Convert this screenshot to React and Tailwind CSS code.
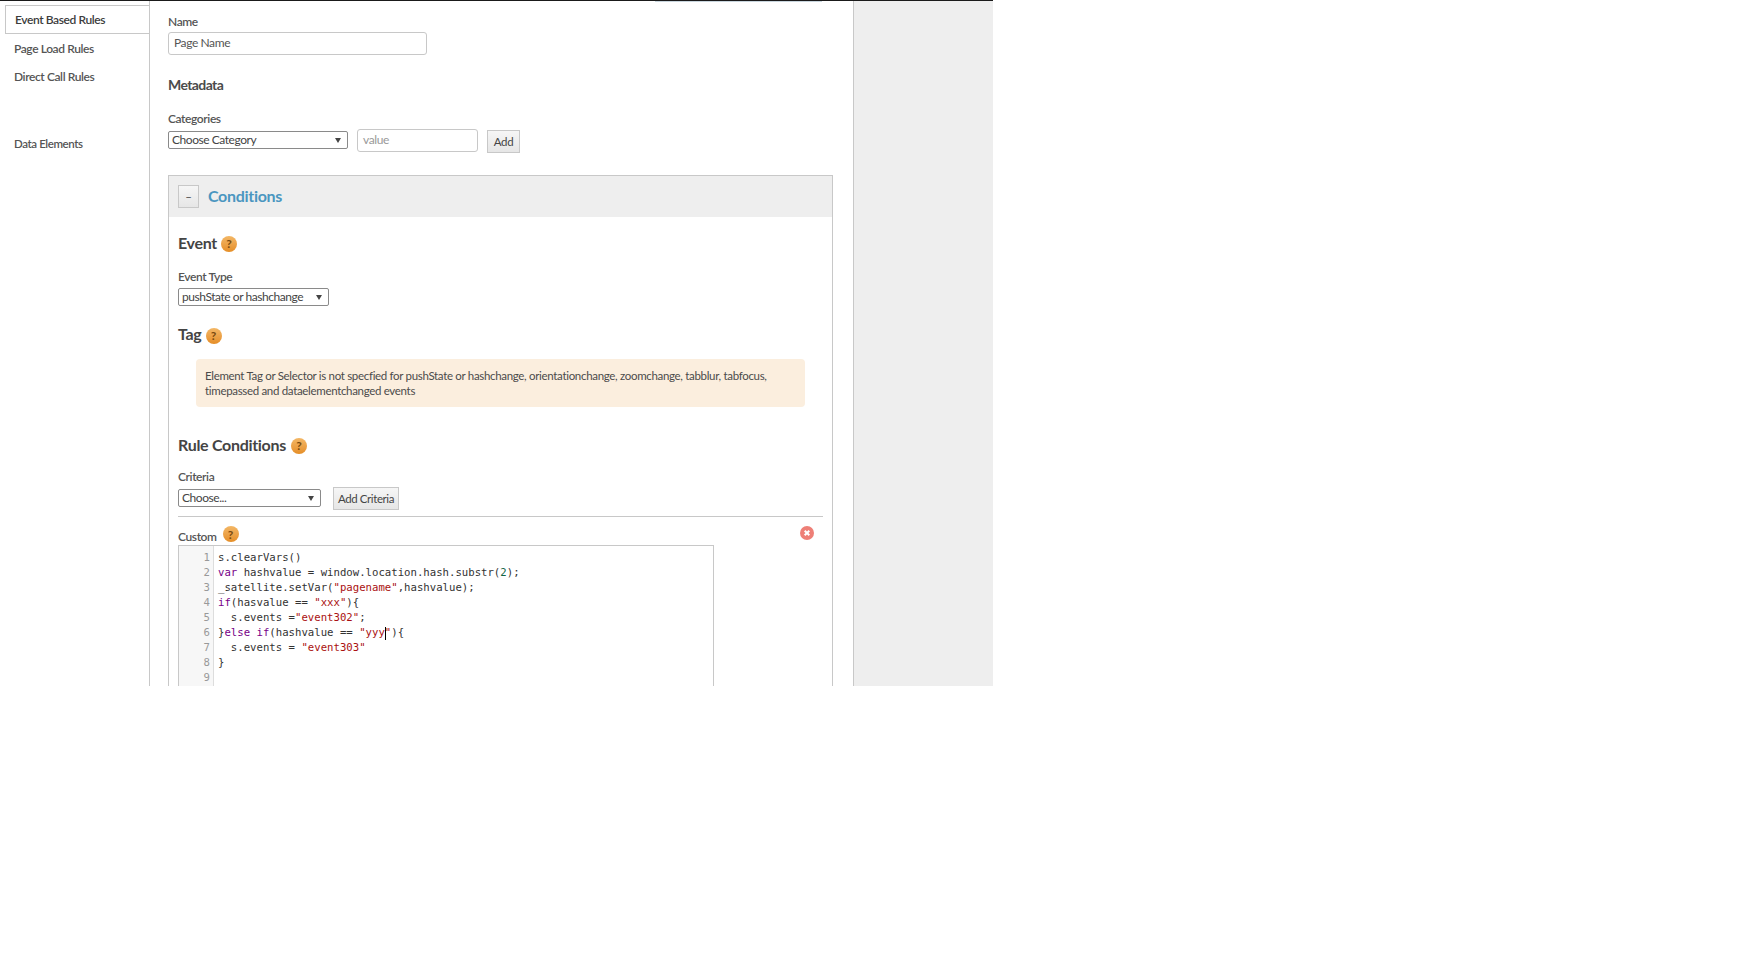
import React from "react";

const codeLines = [
  [["s.clearVars()", "text-[#333]"]],
  [["var", "text-[#708]"], [" hashvalue = window.location.hash.substr(", "text-[#333]"], ["2", "text-[#164]"], [");", "text-[#333]"]],
  [['_satellite.setVar(', "text-[#333]"], ['"pagename"', "text-[#a11]"], [",hashvalue);", "text-[#333]"]],
  [["if", "text-[#708]"], ["(hasvalue == ", "text-[#333]"], ['"xxx"', "text-[#a11]"], ["){", "text-[#333]"]],
  [["  s.events =", "text-[#333]"], ['"event302"', "text-[#a11]"], [";", "text-[#333]"]],
  [["}", "text-[#333]"], ["else if", "text-[#708]"], ["(hashvalue == ", "text-[#333]"], ['"yyy', "text-[#a11]"], ["|", "caret"], ['"', "text-[#a11]"], ["){", "text-[#333]"]],
  [["  s.events = ", "text-[#333]"], ['"event303"', "text-[#a11]"]],
  [["}", "text-[#333]"]],
  [],
];

function Help({ className = "" }) {
  return (
    <span
      className={`inline-flex h-4 w-4 shrink-0 items-center justify-center rounded-full bg-gradient-to-b from-[#f3b765] to-[#e58e25] text-[12px] font-bold tracking-normal text-[#7a4a10] ${className}`}
    >
      ?
    </span>
  );
}

function Select({ label, className = "" }) {
  return (
    <div
      className={`flex h-[18px] items-center justify-between rounded-[2px] border border-[#8a8a8a] bg-white pl-[3px] pr-[6px] text-[12px] leading-none tracking-[-0.45px] text-[#444] ${className}`}
    >
      <span>{label}</span>
      <svg width="6" height="5" viewBox="0 0 6 5">
        <path d="M0 0h6L3 5z" fill="#444" />
      </svg>
    </div>
  );
}

function GrayButton({ children, className = "" }) {
  return (
    <button
      className={`flex items-center justify-center border border-[#c8c8c8] bg-gradient-to-b from-[#f6f6f6] to-[#e6e6e6] text-[11.5px] leading-none tracking-[-0.4px] text-[#444] ${className}`}
    >
      {children}
    </button>
  );
}

export default function App() {
  return (
    <div className="relative flex h-[686px] w-[993px] overflow-hidden border-t border-[#1a1a1a] bg-white font-['Lato','Open_Sans',sans-serif] text-[#4b4b4b]">
      <div className="absolute left-[655px] top-0 h-[1px] w-[167px] bg-[#c9d6de]" />

      {/* left nav */}
      <div className="w-[150px] shrink-0 border-r border-[#c8c8c8] text-[12px] font-semibold tracking-[-0.4px]">
        <div className="ml-[5px] h-[5px] border-b border-[#c8c8c8]" />
        <div className="ml-[5px] flex h-[28px] items-center border-b border-l border-[#c8c8c8] pl-[9px] text-[#3c3c3c]">
          Event Based Rules
        </div>
        <div className="mt-[7px] pl-[14px] leading-[15px] text-[#555]">Page Load Rules</div>
        <div className="mt-[13px] pl-[14px] leading-[15px] text-[#555]">Direct Call Rules</div>
        <div className="mt-[52px] pl-[14px] text-[11.5px] leading-[15px] text-[#555]">Data Elements</div>
      </div>

      {/* main column */}
      <div className="w-[703px] shrink-0 pl-[18px]">
        <div className="mt-[13px] text-[12px] font-semibold leading-[15px] tracking-[-0.4px] text-[#555]">Name</div>
        <div className="mt-[3px] flex h-[23px] w-[259px] items-center rounded-[3px] border border-[#c8c8c8] pb-[1px] pl-[5px] text-[12px] tracking-[-0.4px] text-[#555]">
          Page Name
        </div>
        <div className="mt-[21px] text-[14px] font-bold leading-[18px] tracking-[-0.6px] text-[#4b4b4b]">Metadata</div>
        <div className="mt-[17px] text-[12px] font-semibold leading-[15px] tracking-[-0.4px] text-[#555]">Categories</div>

        <div className="mt-[3px] flex items-start">
          <Select label="Choose Category" className="mt-[2px] w-[180px]" />
          <div className="ml-[9px] flex h-[23px] w-[121px] items-center rounded-[3px] border border-[#c8c8c8] pb-[1px] pl-[5px] text-[12px] tracking-[-0.4px] text-[#999]">
            value
          </div>
          <GrayButton className="ml-[9px] mt-[1px] h-[23px] w-[33px]">Add</GrayButton>
        </div>

        {/* conditions panel */}
        <div className="mt-[22px] h-[520px] w-[665px] border border-[#c8c8c8]">
          <div className="flex h-[41px] items-center bg-[#eeeeee] pl-[9px]">
            <GrayButton className="h-[23px] w-[21px]">–</GrayButton>
            <span className="ml-[9px] pb-[2px] text-[16px] font-bold tracking-[-0.3px] text-[#4a96c0]">Conditions</span>
          </div>

          <div className="pl-[9px]">
            <div className="mt-[16px] flex h-[20px] items-center text-[16px] font-bold tracking-[-0.3px] text-[#444]">
              Event
              <Help className="ml-[4px] mt-[2px]" />
            </div>
            <div className="mt-[16px] text-[12px] font-semibold leading-[15px] tracking-[-0.4px] text-[#555]">Event Type</div>
            <Select label="pushState or hashchange" className="mt-[4px] w-[151px] pr-[6px]" />
            <div className="mt-[18px] flex h-[20px] items-center text-[16px] font-bold tracking-[-0.3px] text-[#444]">
              Tag
              <Help className="ml-[4px] mt-[3px]" />
            </div>

            <div className="ml-[18px] mt-[15px] h-[48px] w-[609px] rounded-[4px] bg-[#fbeede] pl-[9px] pt-[9px] text-[11.5px] leading-[15px] tracking-[-0.32px] text-[#4b4b4b]">
              Element Tag or Selector is not specfied for pushState or hashchange, orientationchange, zoomchange, tabblur, tabfocus,
              <br />
              timepassed and dataelementchanged events
            </div>

            <div className="mt-[28px] flex h-[20px] items-center text-[16px] font-bold tracking-[-0.3px] text-[#444]">
              Rule Conditions
              <Help className="ml-[5px] mt-[2px]" />
            </div>
            <div className="mt-[14px] text-[12px] font-semibold leading-[15px] tracking-[-0.4px] text-[#555]">Criteria</div>
            <div className="flex items-start">
              <Select label="Choose..." className="mt-[5px] w-[143px]" />
              <GrayButton className="ml-[12px] mt-[3px] h-[23px] w-[66px]">Add Criteria</GrayButton>
            </div>
            <div className="mt-[6px] h-[1px] w-[645px] bg-[#c8c8c8]" />

            <div className="relative mt-[9px] flex h-[18px] items-end text-[12px] font-semibold leading-[15px] tracking-[-0.4px] text-[#555]">
              Custom
              <Help className="mb-[2px] ml-[6px]" />
              <svg className="absolute left-[622px] top-0" width="14" height="14" viewBox="0 0 14 14">
                <circle cx="7" cy="7" r="7" fill="#ee7f77" />
                <path d="M4.7 4.7l4.6 4.6M9.3 4.7L4.7 9.3" stroke="#fff" strokeWidth="2" />
              </svg>
            </div>

            {/* code editor */}
            <div className="mt-[1px] flex h-[160px] w-[536px] border border-[#c8c8c8] font-['DejaVu_Sans_Mono',monospace] text-[10.67px] leading-[15px]">
              <div className="w-[35px] shrink-0 border-r border-[#ddd] bg-[#f7f7f7] pt-[4px] pr-[3px] text-right text-[#999]">
                {codeLines.map((_, i) => (
                  <div key={i} className="h-[15px]">{i + 1}</div>
                ))}
              </div>
              <div className="pl-[4px] pt-[4px]">
                {codeLines.map((line, i) => (
                  <div key={i} className="h-[15px] whitespace-pre">
                    {line.map(([text, color], j) =>
                      color === "caret" ? (
                        <span key={j} className="mr-[-1px] inline-block h-[13px] w-[1px] bg-black align-middle" />
                      ) : (
                        <span key={j} className={color}>{text}</span>
                      )
                    )}
                  </div>
                ))}
              </div>
            </div>
          </div>
        </div>
      </div>

      {/* right rail */}
      <div className="w-[140px] shrink-0 border-l border-[#c8c8c8] bg-[#eeeeee]" />
    </div>
  );
}
